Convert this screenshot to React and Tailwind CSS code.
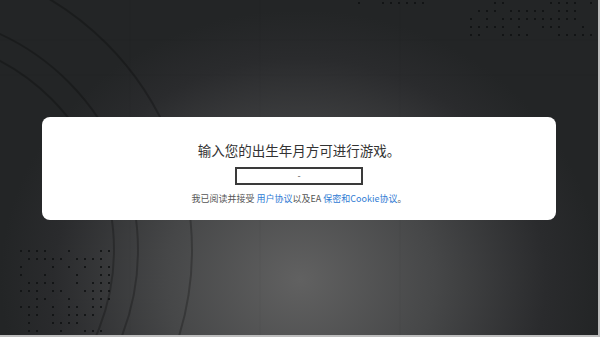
import React from 'react'

function Dots({ className, rows, cols, seed }) {
  const dots = []
  for (let r = 0; r < rows; r++) {
    for (let c = 0; c < cols; c++) {
      const v = Math.sin((r + 1) * 12.9898 + (c + 1) * 78.233 + seed) * 43758.5453
      if (v - Math.floor(v) > 0.4) dots.push(<rect key={r + '-' + c} x={c * 8} y={r * 8} width="2" height="2" />)
    }
  }
  return (
    <svg className={className} width={cols * 8} height={rows * 8} fill="#101213" opacity="0.85">
      {dots}
    </svg>
  )
}

export default function App() {
  return (
    <div
      className="relative w-[600px] h-[337px] overflow-hidden flex items-center justify-center border-r-2 border-b-2 border-[#bdbdbd]"
      style={{ background: 'radial-gradient(ellipse 300px 270px at 300px 280px, #616161 0%, #464748 45%, #2a2b2d 82%, #232526 100%)' }}
    >
      <svg className="absolute left-0 top-0" width="600" height="337" fill="none" stroke="#000" strokeOpacity="0.24" strokeWidth="2">
        <circle cx="-100" cy="250" r="238" />
        <circle cx="-100" cy="250" r="214" />
        <circle cx="-100" cy="250" r="292" />
        <path d="M0 40 H600 M0 75 H600 M130 0 V337 M260 0 V337 M400 0 V337" strokeOpacity="0.06" strokeWidth="0.6" />
      </svg>
      <Dots className="absolute left-[20px] top-[250px]" rows={11} cols={12} seed={1} />
      <Dots className="absolute left-[470px] top-[2px]" rows={5} cols={16} seed={7} />
      <Dots className="absolute left-[350px] top-[2px]" rows={1} cols={10} seed={3} />

      <div className="relative w-[514px] h-[103px] mt-[2px] bg-white rounded-[8px] flex flex-col items-center pt-[24px] font-['Noto_Sans_CJK_SC',sans-serif]">
        <div className="text-[13.5px] leading-[18px] text-[#333333]">输入您的出生年月方可进行游戏。</div>
        <div className="mt-[8px] w-[128px] h-[18px] border-2 border-[#3a3a3a] flex items-center justify-center text-[9px] text-[#555]">-</div>
        <div className="mt-[8px] text-[9px] leading-[12px] text-[#555555]">
          我已阅读并接受 <span className="text-[#2f7bd4]">用户协议</span>以及EA <span className="text-[#2f7bd4]">保密和Cookie协议</span>。
        </div>
      </div>
    </div>
  )
}
